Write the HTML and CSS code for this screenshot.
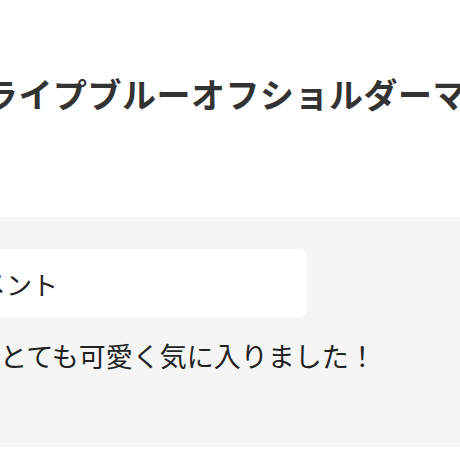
FILE: index.html
```html
<!DOCTYPE html>
<html lang="ja">
<head>
<meta charset="utf-8">
<link rel="stylesheet" href="styles.css">
</head>
<body>
<div class="page">
  <h1 class="product-title">ストライプブルーオフショルダーマキシワンピース</h1>
  <section class="review">
    <div class="review-label">コメント</div>
    <p class="review-text">とても可愛く気に入りました！</p>
  </section>
</div>
</body>
</html>
```
FILE: styles.css
```css
html, body {
  margin: 0;
  padding: 0;
  background: #ffffff;
  overflow: hidden;
}
.page {
  width: 460px;
  height: 460px;
  overflow: hidden;
  font-family: "Noto Sans CJK JP", "Noto Sans", sans-serif;
  color: #333333;
}
.product-title {
  margin: 70px 0 0 -85px;
  font-size: 34px;
  line-height: 48px;
  font-weight: 700;
  letter-spacing: 0.5px;
  white-space: nowrap;
  color: #333333;
}
.review {
  margin-top: 99px;
  height: 230px;
  background: #f5f5f5;
  padding-top: 32px;
  box-sizing: border-box;
}
.review-label {
  margin-left: -62px;
  width: 369px;
  height: 69px;
  box-sizing: border-box;
  padding-left: 16px;
  background: #ffffff;
  border-radius: 10px;
  font-size: 26px;
  line-height: 69px;
  color: #222222;
  white-space: nowrap;
}
.review-text {
  margin: 20px 0 0 0;
  font-size: 27px;
  line-height: 36px;
  color: #222222;
  white-space: nowrap;
}
```
